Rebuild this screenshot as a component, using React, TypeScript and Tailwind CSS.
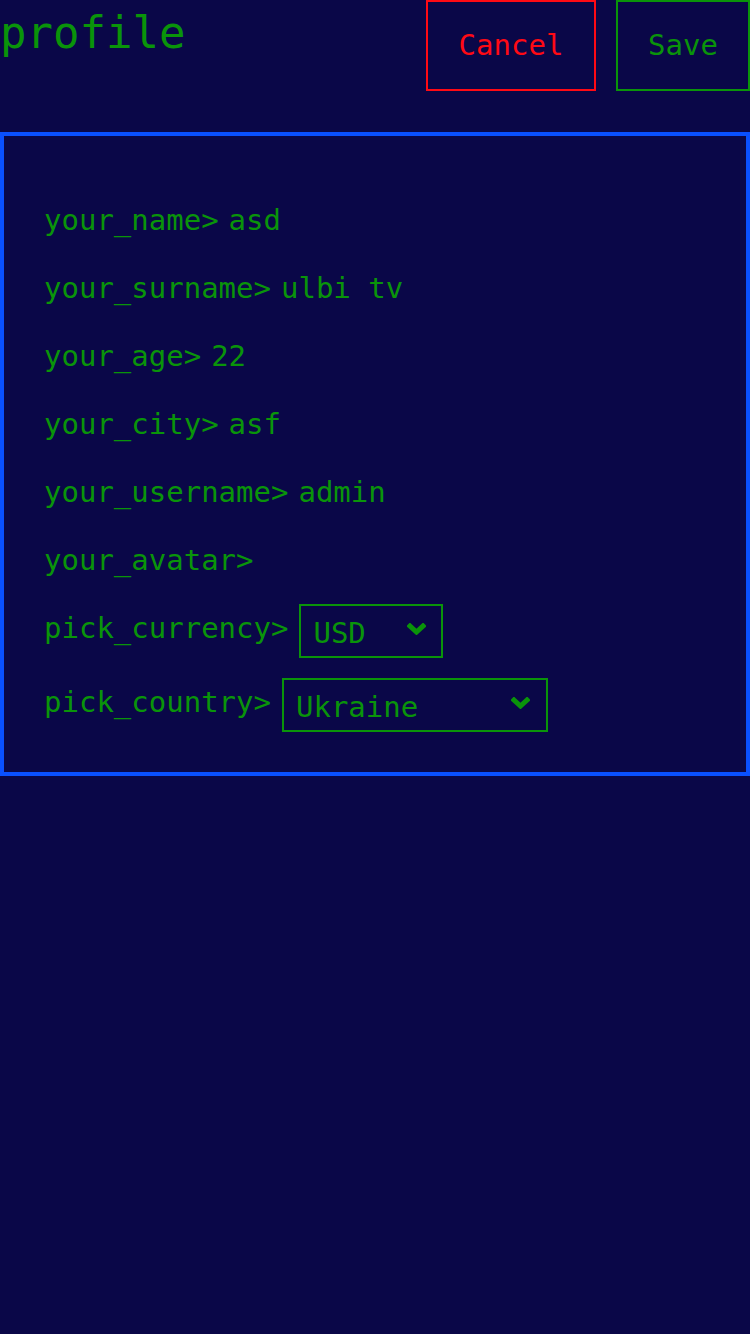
import { useState } from 'react';

const mono = { fontFamily: '"DejaVu Sans Mono", "Liberation Mono", monospace' };

const fields = [
  { id: 'name', label: 'your_name>', value: 'asd' },
  { id: 'surname', label: 'your_surname>', value: 'ulbi tv' },
  { id: 'age', label: 'your_age>', value: '22' },
  { id: 'city', label: 'your_city>', value: 'asf' },
  { id: 'username', label: 'your_username>', value: 'admin' },
  { id: 'avatar', label: 'your_avatar>', value: '' },
];

function Chevron() {
  return (
    <svg width="19" height="12" viewBox="0 0 19 12" aria-hidden>
      <path d="M3 3 L9.5 9 L16 3" fill="none" stroke="#0a940a" strokeWidth="5" strokeLinecap="square" />
    </svg>
  );
}

function Select({ value, options, width, arrowRight }: { value: string; options: string[]; width: string; arrowRight: string }) {
  const [v, setV] = useState(value);
  return (
    <div className={`relative ml-[11px] h-[54px] ${width}`}>
      <select
        value={v}
        onChange={(e) => setV(e.target.value)}
        className="h-full w-full appearance-none border-2 border-[#0a940a] bg-transparent pl-[12px] pt-[3px] text-[29px] text-[#0a940a] outline-none"
        style={mono}
      >
        {options.map((o) => (
          <option key={o} value={o} className="bg-[#0a0748]">
            {o}
          </option>
        ))}
      </select>
      <span className={`pointer-events-none absolute inset-y-0 ${arrowRight} flex items-center pb-[4px]`}>
        <Chevron />
      </span>
    </div>
  );
}

export default function App() {
  return (
    <div className="min-h-[1334px] w-[750px] bg-[#0a0748] text-[#0a940a]" style={mono}>
      {/* header */}
      <div className="flex items-start justify-between">
        <h1 className="mt-[7px] text-[44px] leading-[51px]">profile</h1>
        <div className="flex gap-5">
          <button className="h-[91px] w-[170px] border-2 border-[#ff0a14] text-[29px] text-[#ff0a14]">Cancel</button>
          <button className="h-[91px] w-[134px] border-2 border-[#0a940a] text-[29px] text-[#0a940a]">Save</button>
        </div>
      </div>

      {/* card */}
      <div className="mt-[41px] border-4 border-[#0a50ff] px-10 pt-[50px] pb-[40px]">
        {fields.map((f) => (
          <div key={f.id} className="flex h-[68px] items-center text-[29px] leading-[34px]">
            <span className="whitespace-pre">{f.label}</span>
            {f.id !== 'avatar' && (
              <input
                defaultValue={f.value}
                className="ml-[10px] w-[300px] bg-transparent text-[#0a940a] outline-none"
              />
            )}
          </div>
        ))}

        <div className="mt-[10px] flex items-start text-[29px] leading-[34px]">
          <span className="mt-[7px] whitespace-pre">pick_currency&gt;</span>
          <Select value="USD" options={['USD', 'EUR', 'RUB']} width="w-[144px]" arrowRight="right-[17px]" />
        </div>

        <div className="mt-[20px] flex items-start text-[29px] leading-[34px]">
          <span className="mt-[7px] whitespace-pre">pick_country&gt;</span>
          <Select value="Ukraine" options={['Ukraine', 'Russia', 'Belarus', 'Kazakhstan', 'Armenia']} width="w-[266px]" arrowRight="right-[18px]" />
        </div>
      </div>
    </div>
  );
}
